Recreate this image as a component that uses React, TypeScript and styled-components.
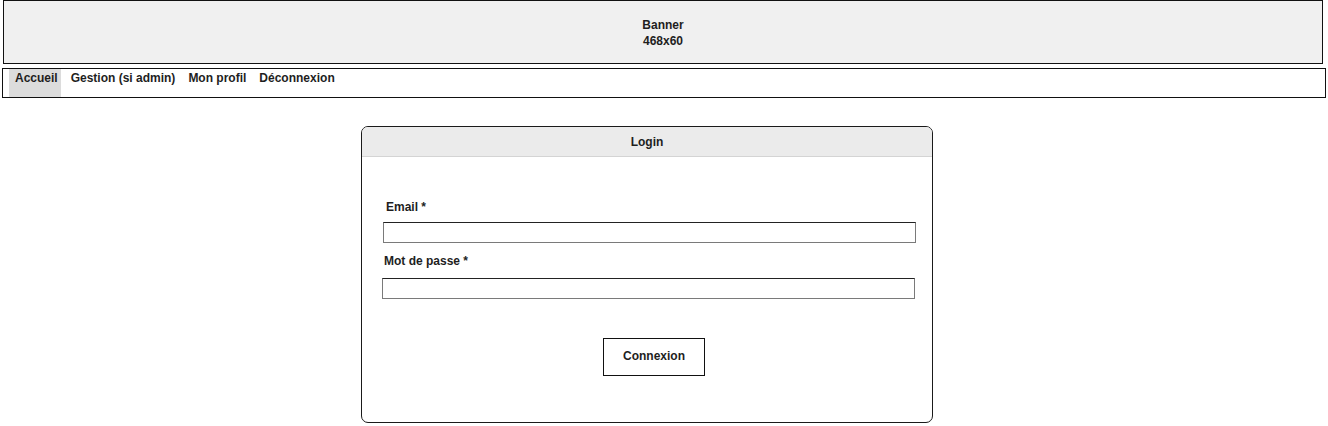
import React from "react";
import styled, { createGlobalStyle } from "styled-components";

const Global = createGlobalStyle`
  html, body { margin: 0; padding: 0; background: #fff; }
  body { font-family: "Liberation Sans", Arial, sans-serif; font-size: 12px; font-weight: bold; color: #1e1e1e; }
  * { box-sizing: border-box; }
`;

const Page = styled.div`
  display: flex;
  flex-direction: column;
  width: 1328px;
  height: 426px;
  overflow: hidden;
`;

const Banner = styled.div`
  margin-left: 3px;
  width: 1320px;
  height: 64px;
  background: #f0f0f0;
  border: 1px solid #111;
  display: flex;
  flex-direction: column;
  align-items: center;
  justify-content: center;
  line-height: 16px;
  padding-top: 1px;
`;

const Nav = styled.nav`
  margin-top: 4px;
  margin-left: 2px;
  width: 1324px;
  height: 30px;
  border: 1px solid #111;
  display: flex;
  padding-left: 6px;
  align-items: stretch;
`;

const NavItem = styled.div<{ $active?: boolean }>`
  padding: 2px 3px 0 6px;
  height: 28px;
  line-height: 14px;
  background: ${(p) => (p.$active ? "#dcdcdc" : "transparent")};
  margin-right: 4px;
`;

const Center = styled.div`
  margin-top: 28px;
  margin-left: 361px;
`;

const Panel = styled.section`
  width: 572px;
  height: 297px;
  border: 1px solid #1a1a1a;
  border-radius: 7px;
  overflow: hidden;
  display: flex;
  flex-direction: column;
`;

const PanelHeader = styled.div`
  height: 30px;
  background: #ebebeb;
  border-bottom: 1px solid #d4d4d4;
  display: flex;
  align-items: center;
  justify-content: center;
`;

const Form = styled.div`
  display: flex;
  flex-direction: column;
  padding-top: 42px;
`;

const Label = styled.label<{ $left: number }>`
  margin-left: ${(p) => p.$left}px;
  height: 16px;
  line-height: 16px;
`;

const Input = styled.div<{ $left: number }>`
  margin-left: ${(p) => p.$left}px;
  width: 533px;
  height: 21px;
  border: 1px solid #7a7a7a;
  border-top-color: #222;
  background: #fff;
`;

const Gap = styled.div<{ $h: number }>`
  height: ${(p) => p.$h}px;
`;

const Button = styled.button`
  align-self: flex-start;
  margin-left: 241px;
  width: 102px;
  height: 38px;
  background: #fff;
  border: 1px solid #111;
  font-family: "Liberation Sans", Arial, sans-serif;
  font-size: 12px;
  font-weight: bold;
  color: #1e1e1e;
  padding: 0 0 2px 0;
`;

export default function App() {
  return (
    <Page>
      <Global />
      <Banner>
        <div>Banner</div>
        <div>468x60</div>
      </Banner>
      <Nav>
        <NavItem $active>Accueil</NavItem>
        <NavItem>Gestion (si admin)</NavItem>
        <NavItem>Mon profil</NavItem>
        <NavItem>Déconnexion</NavItem>
      </Nav>
      <Center>
        <Panel>
          <PanelHeader>Login</PanelHeader>
          <Form>
            <Label $left={24}>Email *</Label>
            <Gap $h={7} />
            <Input $left={21} />
            <Gap $h={10} />
            <Label $left={22}>Mot de passe *</Label>
            <Gap $h={9} />
            <Input $left={20} />
            <Gap $h={39} />
            <Button>Connexion</Button>
          </Form>
        </Panel>
      </Center>
    </Page>
  );
}
